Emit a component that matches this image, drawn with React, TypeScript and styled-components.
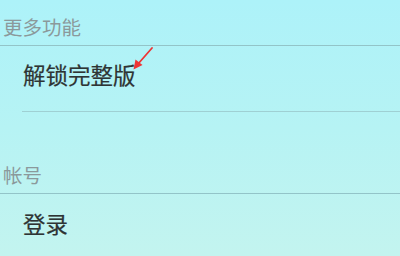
import styled, { createGlobalStyle } from "styled-components";

const GlobalStyle = createGlobalStyle`
  html, body {
    margin: 0;
    padding: 0;
  }
  body {
    width: 400px;
    height: 256px;
    overflow: hidden;
    font-family: "Noto Sans CJK SC", "Noto Sans", sans-serif;
  }
`;

const groups = [
  { title: "更多功能", items: [{ label: "解锁完整版", marked: true }] },
  { title: "帐号", items: [{ label: "登录", marked: false }] },
];

const App = () => {
  return (
    <>
      <GlobalStyle />
      <Screen>
        {groups.map((g, i) => (
          <Group key={g.title} $first={i === 0}>
            <GroupTitle>{g.title}</GroupTitle>
            {g.items.map((item) => (
              <Item key={item.label}>
                <Label>
                  {item.label}
                  {item.marked && (
                    <Arrow width="24" height="26" viewBox="0 0 24 26">
                      <line
                        x1="21"
                        y1="1"
                        x2="7"
                        y2="17"
                        stroke="#ee3434"
                        strokeWidth="1.8"
                        strokeLinecap="round"
                      />
                      <polygon points="2.5,22.5 4.5,12.5 11.5,18" fill="#ee3434" />
                    </Arrow>
                  )}
                </Label>
              </Item>
            ))}
          </Group>
        ))}
      </Screen>
    </>
  );
};

export default App;

const Screen = styled.div`
  width: 400px;
  height: 256px;
  background: linear-gradient(180deg, #adf2f9 0%, #b6f3f4 50%, #c3f4ef 100%);
  display: flex;
  flex-direction: column;
`;

const Group = styled.section<{ $first: boolean }>`
  display: flex;
  flex-direction: column;
  padding-top: ${(p) => (p.$first ? "0" : "36px")};

  &:last-child > div:last-child {
    border-bottom: none;
  }
`;

const GroupTitle = styled.h3`
  margin: 0;
  display: flex;
  align-items: flex-end;
  box-sizing: content-box;
  height: 40px;
  padding: 0 0 5px 3px;
  font-size: 19.5px;
  line-height: 26px;
  font-weight: 400;
  color: #8b999b;
  border-bottom: 1px solid #93c4c8;
`;

const Item = styled.div`
  margin-left: 22px;
  height: 66px;
  display: flex;
  align-items: center;
  padding-bottom: 9px;
  box-sizing: border-box;
  border-bottom: 1px solid #9fd0d3;
`;

const Label = styled.span`
  position: relative;
  padding-left: 1px;
  font-size: 22.5px;
  line-height: 30px;
  color: #2e3434;
  -webkit-text-stroke: 0.2px #2e3434;
`;

const Arrow = styled.svg`
  position: absolute;
  left: 100%;
  top: -12px;
  margin-left: -5px;
`;
